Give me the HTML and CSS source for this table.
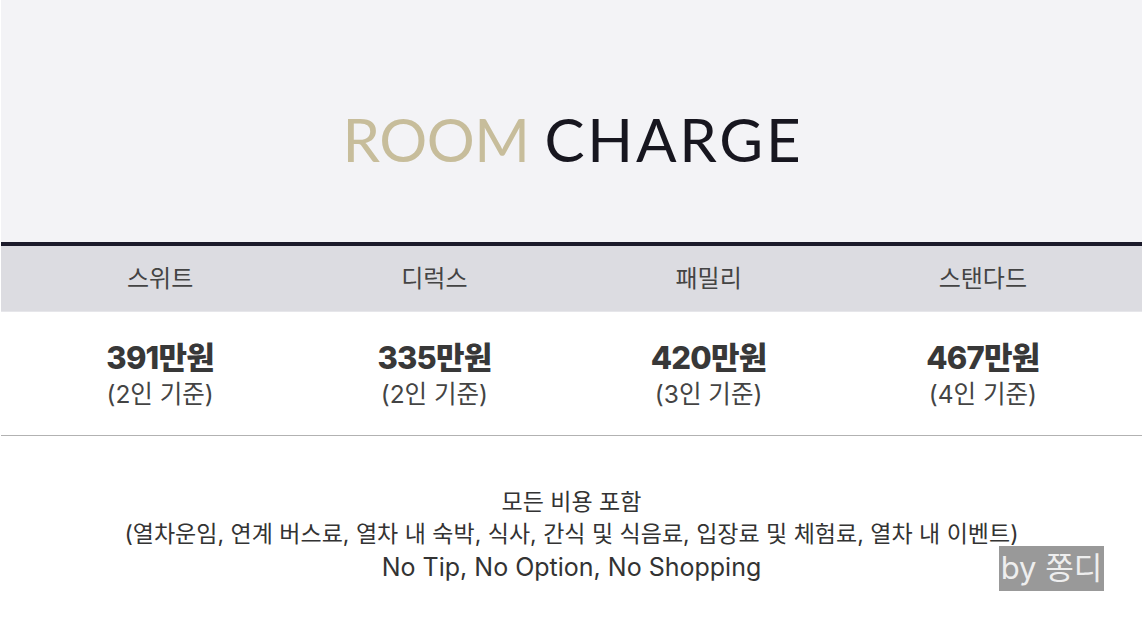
FILE: index.html
```html
<!DOCTYPE html>
<html lang="ko">
<head>
<meta charset="utf-8">
<link rel="stylesheet" href="styles.css">
</head>
<body>
<div class="page">
  <section class="hero">
    <h1 class="title"><span class="gold">ROOM</span> <span class="dark">CHARGE</span></h1>
  </section>
  <div class="table">
    <div class="head">
      <div class="cell">스위트</div>
      <div class="cell">디럭스</div>
      <div class="cell">패밀리</div>
      <div class="cell">스탠다드</div>
    </div>
    <div class="body">
      <div class="cell"><div class="price">391만원</div><div class="basis">(2인 기준)</div></div>
      <div class="cell"><div class="price">335만원</div><div class="basis">(2인 기준)</div></div>
      <div class="cell"><div class="price">420만원</div><div class="basis">(3인 기준)</div></div>
      <div class="cell"><div class="price">467만원</div><div class="basis">(4인 기준)</div></div>
    </div>
  </div>
  <section class="notes">
    <p class="note">모든 비용 포함</p>
    <p class="note">(열차운임, 연계 버스료, 열차 내 숙박, 식사, 간식 및 식음료, 입장료 및 체험료, 열차 내 이벤트)</p>
    <p class="note en">No Tip, No Option, No Shopping</p>
  </section>
  <div class="badge">by 쫑디</div>
</div>
</body>
</html>
```

FILE: styles.css
```css
* { box-sizing: border-box; margin: 0; padding: 0; }
html, body { background: #ffffff; }
body {
  font-family: "Inter", "Noto Sans CJK KR", sans-serif;
  width: 1143px;
  height: 631px;
  overflow: hidden;
}
.page {
  position: relative;
  width: 1141px;
  height: 631px;
  margin-left: 1px;
}
.hero {
  height: 242px;
  background: #f3f3f6;
  display: flex;
  justify-content: center;
  padding-top: 103px;
}
.title {
  font-family: "Lato", "Noto Sans CJK KR", sans-serif;
  font-weight: 400;
  font-size: 60px;
  line-height: 72px;
  letter-spacing: -0.5px;
  white-space: nowrap;
  padding-left: 3px;
}
.gold { color: #c7bd9b; }
.dark {
  color: #17161f;
  letter-spacing: 2.8px;
}
.table { border-top: 4px solid #1b1a2a; }
.head, .body {
  display: grid;
  grid-template-columns: repeat(4, 1fr);
  padding: 0 22px;
}
.head {
  height: 66px;
  background: #dcdce1;
  border-bottom: 1px solid #e6e6ea;
  align-items: center;
}
.head .cell {
  text-align: center;
  font-family: "Noto Sans CJK KR", sans-serif;
  font-size: 24px;
  line-height: 30px;
  color: #444444;
  padding-bottom: 4px;
}
.body {
  height: 124px;
  border-bottom: 1px solid #b2b2b2;
  align-items: start;
  padding-top: 27px;
}
.body .cell { text-align: center; }
.price {
  font-family: "Inter", "Noto Sans CJK KR", sans-serif;
  font-weight: 800;
  font-size: 31px;
  line-height: 38px;
  letter-spacing: -0.8px;
  color: #383838;
}
.basis {
  font-family: "Inter", "Noto Sans CJK KR", sans-serif;
  font-size: 24.5px;
  line-height: 34px;
  color: #444444;
}
.notes {
  padding-top: 50px;
  text-align: center;
  color: #333333;
}
.note {
  font-family: "Inter", "Noto Sans CJK KR", sans-serif;
  font-size: 23px;
  line-height: 32px;
}
.note.en { font-size: 25px; line-height: 35px; }
.badge {
  position: absolute;
  left: 998px;
  top: 546px;
  width: 105px;
  height: 45px;
  background: #999999;
  color: #eeeeee;
  font-family: "Inter", "Noto Sans CJK KR", sans-serif;
  font-size: 31px;
  line-height: 44px;
  text-align: center;
}
```
